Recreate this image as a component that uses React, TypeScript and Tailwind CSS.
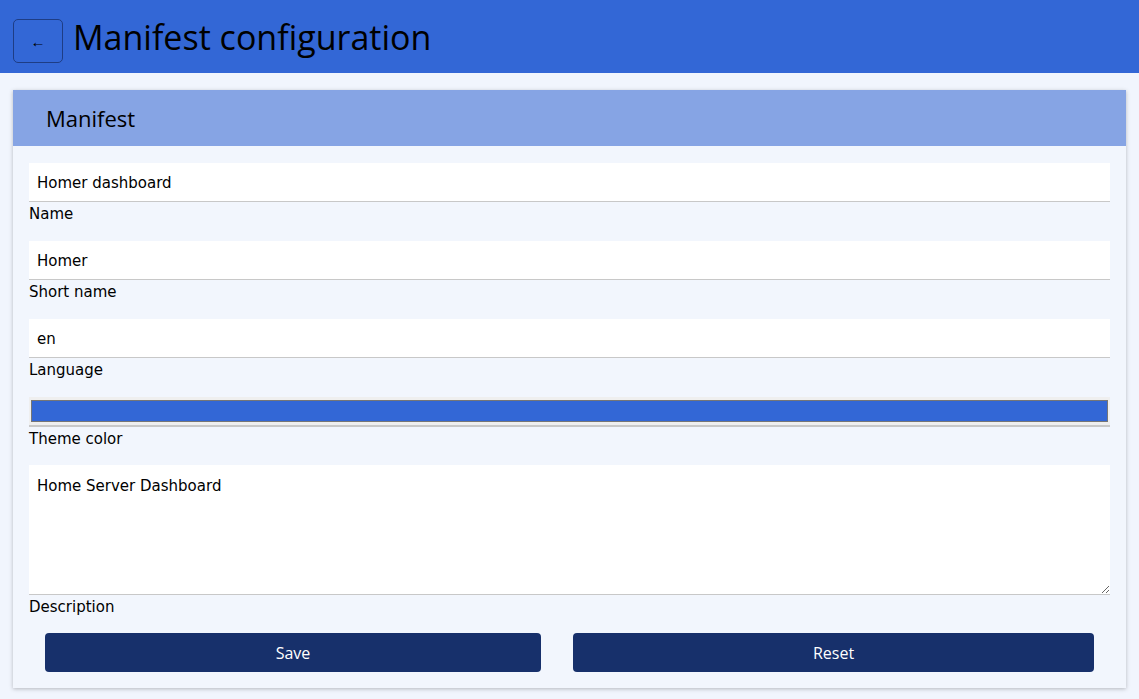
import { useState } from 'react';

const FIELDS = [
  { label: 'Name', value: 'Homer dashboard' },
  { label: 'Short name', value: 'Homer' },
  { label: 'Language', value: 'en' },
];

const uiFont = "font-['Open_Sans','Noto_Sans',sans-serif]";
const formFont = "font-['DejaVu_Sans','Verdana',sans-serif]";

export default function App() {
  const [values, setValues] = useState(FIELDS.map((f) => f.value));
  const [description, setDescription] = useState('Home Server Dashboard');

  return (
    <div className={`min-h-[699px] w-[1139px] bg-[#f1f5fd] ${uiFont}`}>
      {/* Top bar */}
      <header className="flex h-[73px] items-center gap-[10px] bg-[#3367d6] px-[13px]">
        <button className="mb-[10px] flex h-[44px] w-[50px] items-center justify-center self-end rounded-[5px] border border-[#1e3d85] text-[15px] text-black">
          ←
        </button>
        <h1 className="pt-[1px] text-[34px] leading-none text-black">Manifest configuration</h1>
      </header>

      <main className="px-[13px] pt-[17px] pb-[11px]">
        <section className="w-[1113px] bg-[#f2f6fd] shadow-[0_1px_4px_rgba(0,0,0,0.25)]">
          {/* Card header */}
          <div className="flex h-[56px] items-center bg-[#86a4e4] pl-[33px] pt-[1px]">
            <h2 className="text-[22px] text-black">Manifest</h2>
          </div>

          <div className={`px-[16px] pt-[17px] pb-[16px] ${formFont}`}>
            {FIELDS.map((f, i) => (
              <div key={f.label} className="mb-[19px]">
                <input
                  value={values[i]}
                  onChange={(e) => setValues(values.map((v, j) => (j === i ? e.target.value : v)))}
                  className="block h-[39px] w-full border-b border-[#c8c8c8] bg-white px-[8px] pt-[1px] text-[15px] text-black outline-none"
                />
                <label className="block h-[20px] pt-[3px] text-[15px] leading-[18px] text-black">{f.label}</label>
              </div>
            ))}

            {/* Theme colour */}
            <div className="mb-[18px]">
              <div className="h-[30px] border-b-2 border-[#c8c8c8] bg-[#efefef] px-[2px] pt-[3px] pb-[3px]">
                <div className="h-[22px] w-full border border-[#767676] bg-[#3367d6]" />
              </div>
              <label className="block h-[20px] pt-[3px] text-[15px] leading-[18px] text-black">Theme color</label>
            </div>

            {/* Description */}
            <div className="mb-[18px]">
              <textarea
                value={description}
                onChange={(e) => setDescription(e.target.value)}
                className="block h-[130px] w-full resize-y border-b border-[#c8c8c8] bg-white px-[8px] pt-[10px] text-[15px] text-black outline-none"
              />
              <label className="block h-[20px] pt-[3px] text-[15px] leading-[18px] text-black">Description</label>
            </div>

            <div className={`flex gap-[32px] px-[16px] ${uiFont}`}>
              <button className="h-[39px] w-[496px] rounded-[4px] bg-[#17306b] text-[16px] text-white">Save</button>
              <button className="h-[39px] flex-1 rounded-[4px] bg-[#17306b] text-[16px] text-white">Reset</button>
            </div>
          </div>
        </section>
      </main>
    </div>
  );
}
